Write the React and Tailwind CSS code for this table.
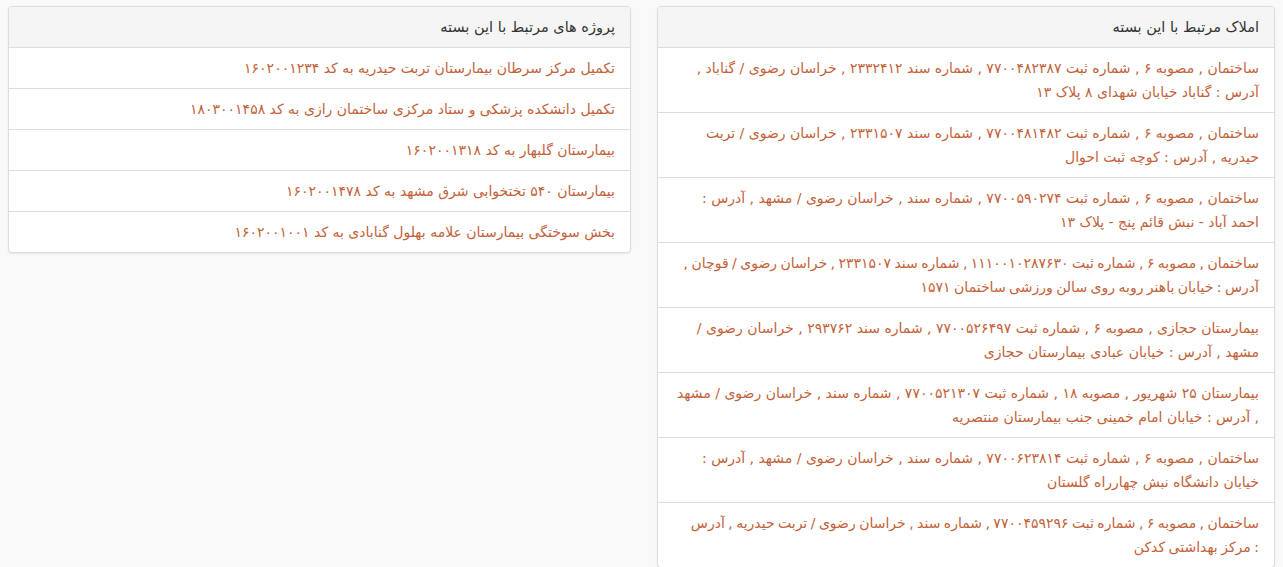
import React from 'react'

// tight: a little less word spacing so the line breaks where the original does
const properties = [
  { text: 'ساختمان , مصوبه ۶ , شماره ثبت ۷۷۰۰۴۸۲۳۸۷ , شماره سند ۲۳۳۲۴۱۲ , خراسان رضوی / گناباد , آدرس : گناباد خیابان شهدای ۸ پلاک ۱۳' },
  { text: 'ساختمان , مصوبه ۶ , شماره ثبت ۷۷۰۰۴۸۱۴۸۲ , شماره سند ۲۳۳۱۵۰۷ , خراسان رضوی / تربت حیدریه , آدرس : کوچه ثبت احوال' },
  { text: 'ساختمان , مصوبه ۶ , شماره ثبت ۷۷۰۰۵۹۰۲۷۴ , شماره سند , خراسان رضوی / مشهد , آدرس : احمد آباد - نبش قائم پنج - پلاک ۱۳' },
  { text: 'ساختمان , مصوبه ۶ , شماره ثبت ۱۱۱۰۰۱۰۲۸۷۶۳۰ , شماره سند ۲۳۳۱۵۰۷ , خراسان رضوی / قوچان , آدرس : خیابان باهنر روبه روی سالن ورزشی ساختمان ۱۵۷۱', tight: true },
  { text: 'بیمارستان حجازی , مصوبه ۶ , شماره ثبت ۷۷۰۰۵۲۶۴۹۷ , شماره سند ۲۹۳۷۶۲ , خراسان رضوی / مشهد , آدرس : خیابان عبادی بیمارستان حجازی' },
  { text: 'بیمارستان ۲۵ شهریور , مصوبه ۱۸ , شماره ثبت ۷۷۰۰۵۲۱۳۰۷ , شماره سند , خراسان رضوی / مشهد ,\u00a0آدرس : خیابان امام خمینی جنب بیمارستان منتصریه' },
  { text: 'ساختمان , مصوبه ۶ , شماره ثبت ۷۷۰۰۶۲۳۸۱۴ , شماره سند , خراسان رضوی / مشهد , آدرس : خیابان دانشگاه نبش چهارراه گلستان' },
  { text: 'ساختمان , مصوبه ۶ , شماره ثبت ۷۷۰۰۴۵۹۲۹۶ , شماره سند , خراسان رضوی / تربت حیدریه , آدرس :\u00a0مرکز بهداشتی کدکن', tight: true },
]

const projects = [
  { text: 'تکمیل مرکز سرطان بیمارستان تربت حیدریه به کد ۱۶۰۲۰۰۱۲۳۴' },
  { text: 'تکمیل دانشکده پزشکی و ستاد مرکزی ساختمان رازی به کد ۱۸۰۳۰۰۱۴۵۸' },
  { text: 'بیمارستان گلبهار به کد ۱۶۰۲۰۰۱۳۱۸' },
  { text: 'بیمارستان ۵۴۰ تختخوابی شرق مشهد به کد ۱۶۰۲۰۰۱۴۷۸' },
  { text: 'بخش سوختگی بیمارستان علامه بهلول گنابادی به کد ۱۶۰۲۰۰۱۰۰۱' },
]

const Panel = ({ title, items, width }) => {
  return (
    <div className={`${width} shrink-0 self-start bg-white border border-[#dddddd] rounded-[4px] shadow-[0_1px_2px_rgba(0,0,0,0.08)] overflow-hidden`}>
      {/* Heading */}
      <div className="bg-[#f5f5f5] border-b border-[#dddddd] px-[15px] py-[8px] text-[14.5px] leading-[24px] text-[#333333]">
        {title}
      </div>

      {/* Items */}
      <ul>
        {items.map((item, i) => (
          <li
            key={i}
            className={`px-[15px] py-[8px] border-b border-[#dddddd] last:border-b-0 text-[14px] leading-[24px] ${item.tight ? '[word-spacing:-1px]' : ''}`}
          >
            <a href="#" className="text-[#c2623a]">
              {item.text}
            </a>
          </li>
        ))}
      </ul>
    </div>
  )
}

const App = () => {
  return (
    <div
      dir="rtl"
      className="min-h-screen bg-[#f9f9f9] px-[8px] pt-[6px] font-['DejaVu_Sans',sans-serif]"
    >
      <div className="flex gap-[26px]">
        <Panel title="املاک مرتبط با این بسته" items={properties} width="w-[618px]" />
        <Panel title="پروژه های مرتبط با این بسته" items={projects} width="w-[623px]" />
      </div>
    </div>
  )
}

export default App
